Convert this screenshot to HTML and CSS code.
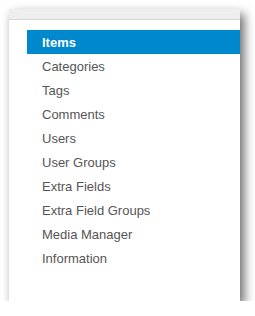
FILE: index.html
```html
<!DOCTYPE html>
<html lang="en">
<head>
    <meta charset="UTF-8">
    <title>Menu</title>
    <link rel="stylesheet" href="styles.css">
</head>
<body>
    <div class="panel">
        <div class="panel-head"></div>
        <ul class="side-menu">
            <li class="active"><a href="#">Items</a></li>
            <li><a href="#">Categories</a></li>
            <li><a href="#">Tags</a></li>
            <li><a href="#">Comments</a></li>
            <li><a href="#">Users</a></li>
            <li><a href="#">User Groups</a></li>
            <li><a href="#">Extra Fields</a></li>
            <li><a href="#">Extra Field Groups</a></li>
            <li><a href="#">Media Manager</a></li>
            <li><a href="#">Information</a></li>
        </ul>
    </div>
</body>
</html>
```

FILE: styles.css
```css
* {
    box-sizing: border-box;
    margin: 0;
    padding: 0;
}

body {
    font-family: 'Liberation Sans', Arial, sans-serif;
    font-size: 13px;
    background: #fff;
}

.panel {
    margin: 9px 0 0 9px;
    width: 231px;
    height: 292px;
    background: #fff;
    box-shadow: 4px 5px 10px rgba(0,0,0,0.6);
}

.panel-head {
    height: 11px;
    background: #eeeeee;
    border-bottom: 1px solid #d6d6d6;
}

.side-menu {
    list-style: none;
    margin: 10px 0 0 18px;
}

.side-menu li a {
    display: block;
    height: 24px;
    padding: 2px 0 0 15px;
    line-height: 22px;
    color: #555;
    text-decoration: none;
}

.side-menu li.active a {
    background: #0088cc;
    color: #fff;
    font-weight: bold;
}
```
